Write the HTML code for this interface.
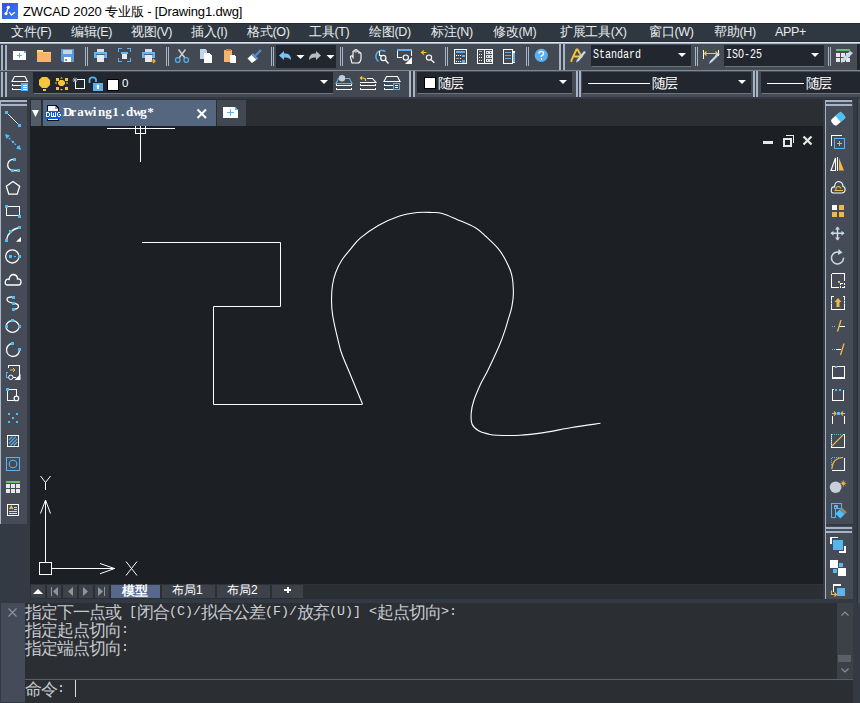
<!DOCTYPE html>
<html><head><meta charset="utf-8">
<style>
*{margin:0;padding:0;box-sizing:border-box}
html,body{width:860px;height:703px;overflow:hidden;background:#343a44;font-family:"Liberation Sans",sans-serif}
svg{position:absolute;left:0;top:0}
.t{position:absolute;white-space:nowrap;line-height:1}
</style></head><body>
<svg width="860" height="703" viewBox="0 0 860 703" shape-rendering="crispEdges"><rect x="0" y="0" width="860" height="703" fill="#343a44" /><rect x="0" y="0" width="860" height="23" fill="#ffffff" /><rect x="0" y="23" width="860" height="19" fill="#2f3740" /><rect x="0" y="23" width="860" height="1" fill="#262b31" /><rect x="0" y="41" width="860" height="1" fill="#282d33" /><rect x="0" y="42" width="860" height="1" fill="#dfe5eb" /><rect x="0" y="43" width="860" height="1" fill="#a2b2c4" /><rect x="0" y="44" width="857" height="26" fill="#434953" /><rect x="857" y="44" width="3" height="26" fill="#22262d" /><rect x="0" y="70" width="860" height="1" fill="#7d8894" /><rect x="0" y="71" width="860" height="26" fill="#434953" /><rect x="0" y="97" width="860" height="2" fill="#323942" /><rect x="0" y="99" width="860" height="3" fill="#2b2e33" /><rect x="0" y="44" width="1" height="26" fill="#3a4049" /><rect x="1" y="45" width="2" height="25" fill="#a6b4c6" /><rect x="3" y="45" width="2" height="25" fill="#394049" /><rect x="5" y="45" width="2" height="25" fill="#a6b4c6" /><rect x="1" y="72" width="2" height="25" fill="#a6b4c6" /><rect x="3" y="72" width="2" height="25" fill="#394049" /><rect x="5" y="72" width="2" height="25" fill="#a6b4c6" /><rect x="0" y="100" width="27" height="424" fill="#454b57" /><rect x="0" y="100" width="1" height="424" fill="#a6b4c4" /><rect x="1" y="100" width="26" height="2" fill="#a6b4c6" /><rect x="1" y="104" width="26" height="2" fill="#a6b4c6" /><rect x="0" y="524" width="27" height="75" fill="#343a44" /><rect x="27" y="99" width="3" height="500" fill="#343a44" /><rect x="30" y="99" width="793" height="27" fill="#2b2e33" /><rect x="31" y="100" width="10" height="26" fill="#505c66" /><rect x="43" y="100" width="173" height="26" fill="#54677f" /><rect x="217" y="100" width="29" height="26" fill="#424851" /><rect x="30" y="126" width="793" height="458" fill="#1c1f23" /><rect x="30" y="584" width="793" height="15" fill="#2b2e33" /><rect x="30" y="584" width="793" height="1" fill="#2f3338" /><rect x="0" y="599" width="860" height="4" fill="#323942" /><rect x="823" y="99" width="2" height="500" fill="#343a44" /><rect x="825" y="100" width="1" height="499" fill="#a6b4c4" /><rect x="826" y="100" width="27" height="424" fill="#454b57" /><rect x="826" y="100" width="26" height="2" fill="#a6b4c6" /><rect x="826" y="104" width="26" height="2" fill="#a6b4c6" /><rect x="826" y="524" width="27" height="2" fill="#343a44" /><rect x="826" y="526" width="27" height="73" fill="#454b57" /><rect x="826" y="527" width="26" height="2" fill="#a6b4c6" /><rect x="826" y="531" width="26" height="2" fill="#a6b4c6" /><rect x="853" y="99" width="7" height="604" fill="#343a44" /><rect x="857" y="99" width="1" height="604" fill="#2b2e33" /><rect x="858" y="99" width="2" height="604" fill="#434b55" /><rect x="0" y="603" width="860" height="100" fill="#343a44" /><rect x="1" y="603" width="24" height="99" fill="#454b58" /><rect x="25" y="603" width="812" height="76" fill="#2b2e33" /><rect x="837" y="603" width="16" height="76" fill="#3c4047" /><rect x="25" y="679" width="828" height="1" fill="#56616b" /><rect x="25" y="680" width="828" height="23" fill="#2b2e33" /><path d="M142 242.5 H280.5 V306.5 H213.5 V404.5 H362.5" stroke="#ffffff" stroke-width="1" fill="none" shape-rendering="geometricPrecision"/><path d="M362.5 404.0 C360.5 399.2 354.0 383.5 350.6 375.3 C347.2 367.1 344.1 360.2 342.1 354.8 C340.1 349.4 340.3 349.4 338.7 342.9 C337.1 336.4 333.9 322.7 332.7 315.6 C331.5 308.5 331.5 305.3 331.5 300.2 C331.5 295.1 331.8 289.6 332.5 285.0 C333.2 280.4 334.1 276.7 335.7 272.5 C337.3 268.3 339.2 264.1 341.9 260.0 C344.6 255.9 348.6 251.4 351.7 247.7 C354.8 244.0 356.1 241.6 360.5 237.9 C364.9 234.2 371.8 229.1 378.3 225.4 C384.8 221.8 393.1 218.2 399.6 216.0 C406.1 213.8 412.1 213.1 417.4 212.5 C422.7 211.9 427.5 212.3 431.6 212.5 C435.8 212.7 438.1 212.3 442.3 213.5 C446.5 214.7 451.4 217.0 457.0 219.4 C462.6 221.8 471.0 225.1 475.8 227.9 C480.6 230.8 482.3 233.1 486.0 236.5 C489.7 239.9 494.7 244.4 498.0 248.4 C501.3 252.4 503.4 255.9 505.7 260.3 C508.0 264.7 510.4 269.2 511.7 274.8 C513.0 280.4 513.4 288.2 513.4 293.6 C513.4 299.0 512.5 303.0 511.7 307.3 C510.9 311.6 509.5 315.2 508.3 319.2 C507.1 323.2 506.2 326.7 504.7 331.2 C503.2 335.7 501.9 339.5 499.1 346.0 C496.3 352.5 491.0 363.8 487.9 370.2 C484.8 376.6 482.8 379.2 480.5 384.2 C478.2 389.2 475.6 395.2 474.0 400.0 C472.4 404.8 471.5 409.0 471.2 413.0 C470.9 417.0 470.9 421.2 472.1 424.2 C473.3 427.1 476.0 429.1 478.6 430.7 C481.2 432.3 484.8 433.1 487.9 433.9 C491.0 434.7 491.9 435.1 497.2 435.3 C502.5 435.5 511.8 435.8 519.5 435.3 C527.2 434.9 535.0 433.9 543.7 432.6 C552.4 431.3 562.1 429.1 571.6 427.5 C581.1 425.9 595.7 424.0 600.5 423.3" stroke="#ffffff" stroke-width="1.1" fill="none" shape-rendering="geometricPrecision"/><rect x="107" y="128" width="68" height="1" fill="#ffffff" /><rect x="140" y="126" width="1" height="36" fill="#ffffff" /><path d="M135.5 126 V133.5 H145.5 V126" stroke="#ffffff" stroke-width="1" fill="none" /><path d="M39.5 562.5 h12 v12 h-12 z" stroke="#ffffff" stroke-width="1" fill="none" /><rect x="45" y="500" width="1" height="62" fill="#ffffff" /><path d="M45.5 500 L40.5 513.5 M45.5 500 L50.5 513.5" stroke="#ffffff" stroke-width="1" fill="none" shape-rendering="geometricPrecision"/><path d="M40.5 476 L45.5 482.5 L50.5 476 M45.5 482.5 V490" stroke="#ffffff" stroke-width="1" fill="none" shape-rendering="geometricPrecision"/><rect x="52" y="568" width="63" height="1" fill="#ffffff" /><path d="M114.5 568.5 L100 563.5 M114.5 568.5 L100 573.8" stroke="#ffffff" stroke-width="1" fill="none" shape-rendering="geometricPrecision"/><path d="M126 561.5 L137 575.5 M137 561.5 L126 575.5" stroke="#ffffff" stroke-width="1" fill="none" shape-rendering="geometricPrecision"/><rect x="763" y="141" width="10" height="3" fill="#e8e8e8" /><path d="M783.5 138.5 h7 v7 h-7 z" stroke="#e8e8e8" stroke-width="2" fill="none" /><path d="M786 135.5 h7.5 v7.5" stroke="#e8e8e8" stroke-width="1.5" fill="none" /><path d="M803.5 136.5 L811.5 144.5 M811.5 136.5 L803.5 144.5" stroke="#e8e8e8" stroke-width="2.2" fill="none" shape-rendering="geometricPrecision"/><rect x="85" y="47" width="1" height="19" fill="#a6b4c6" /><rect x="87" y="47" width="1" height="19" fill="#a6b4c6" /><rect x="166" y="47" width="1" height="19" fill="#a6b4c6" /><rect x="168" y="47" width="1" height="19" fill="#a6b4c6" /><rect x="271" y="47" width="1" height="19" fill="#a6b4c6" /><rect x="273" y="47" width="1" height="19" fill="#a6b4c6" /><rect x="340" y="47" width="1" height="19" fill="#a6b4c6" /><rect x="342" y="47" width="1" height="19" fill="#a6b4c6" /><rect x="445" y="47" width="1" height="19" fill="#a6b4c6" /><rect x="447" y="47" width="1" height="19" fill="#a6b4c6" /><rect x="526" y="47" width="1" height="19" fill="#a6b4c6" /><rect x="528" y="47" width="1" height="19" fill="#a6b4c6" /><rect x="276" y="45" width="60" height="23" fill="#21262f" /><rect x="559" y="44" width="2" height="26" fill="#a6b4c6" /><rect x="561" y="44" width="2" height="26" fill="#394049" /><rect x="563" y="44" width="2" height="26" fill="#a6b4c6" /><rect x="565" y="44" width="292" height="26" fill="#464c56" /><rect x="591" y="45" width="100" height="21" fill="#21262f" /><rect x="592" y="66" width="99" height="1" fill="#6c7480" /><path d="M678.0 53 h8 l-4.0 4 z" fill="#ffffff" shape-rendering="geometricPrecision"/><rect x="695" y="47" width="1" height="19" fill="#a6b4c6" /><rect x="697" y="47" width="1" height="19" fill="#a6b4c6" /><rect x="724" y="45" width="100" height="21" fill="#21262f" /><rect x="725" y="66" width="99" height="1" fill="#6c7480" /><path d="M811.0 53 h8 l-4.0 4 z" fill="#ffffff" shape-rendering="geometricPrecision"/><rect x="828" y="47" width="1" height="19" fill="#a6b4c6" /><rect x="830" y="47" width="1" height="19" fill="#a6b4c6" /><rect x="33" y="72" width="300" height="21" fill="#21262f" /><rect x="34" y="93" width="299" height="1" fill="#6c7480" /><path d="M320.0 80 h8 l-4.0 4 z" fill="#ffffff" shape-rendering="geometricPrecision"/><rect x="409" y="71" width="2" height="26" fill="#a6b4c6" /><rect x="411" y="71" width="2" height="26" fill="#394049" /><rect x="413" y="71" width="2" height="26" fill="#a6b4c6" /><rect x="415" y="71" width="445" height="26" fill="#464c56" /><rect x="417" y="72" width="155" height="21" fill="#21262f" /><rect x="418" y="93" width="154" height="1" fill="#6c7480" /><path d="M559.0 80 h8 l-4.0 4 z" fill="#ffffff" shape-rendering="geometricPrecision"/><rect x="576" y="71" width="2" height="26" fill="#a6b4c6" /><rect x="578" y="71" width="1" height="26" fill="#394049" /><rect x="579" y="71" width="2" height="26" fill="#a6b4c6" /><rect x="582" y="72" width="169" height="21" fill="#21262f" /><rect x="583" y="93" width="168" height="1" fill="#6c7480" /><path d="M738.0 80 h8 l-4.0 4 z" fill="#ffffff" shape-rendering="geometricPrecision"/><rect x="753" y="71" width="2" height="26" fill="#a6b4c6" /><rect x="755" y="71" width="1" height="26" fill="#394049" /><rect x="756" y="71" width="2" height="26" fill="#a6b4c6" /><rect x="761" y="72" width="99" height="21" fill="#21262f" /><rect x="762" y="93" width="98" height="1" fill="#6c7480" /><rect x="107" y="79" width="12" height="12" fill="#000" /><rect x="108" y="80" width="10" height="10" fill="#fff" /><rect x="424" y="77" width="12" height="12" fill="#000" /><rect x="425" y="78" width="10" height="10" fill="#fff" /><rect x="588" y="83" width="62" height="1" fill="#fff" /><rect x="767" y="83" width="37" height="1" fill="#fff" /><path d="M32.0 110 h7 l-3.5 7 z" fill="#ffffff" shape-rendering="geometricPrecision"/><path d="M197.5 109.5 L206 118 M206 109.5 L197.5 118" stroke="#fff" stroke-width="2.1" fill="none" shape-rendering="geometricPrecision"/><rect x="31" y="585" width="14" height="13" fill="#3d424a" /><rect x="47" y="585" width="14" height="13" fill="#3d424a" /><rect x="63" y="585" width="14" height="13" fill="#3d424a" /><rect x="79" y="585" width="14" height="13" fill="#3d424a" /><rect x="95" y="585" width="14" height="13" fill="#3d424a" /><path d="M33 594 h10 l-5 -5 z" fill="#fff" shape-rendering="geometricPrecision"/><rect x="51" y="587" width="1" height="9" fill="#8d959e" /><path d="M58 587 v9 l-5 -4.5 z" fill="#8d959e" shape-rendering="geometricPrecision"/><path d="M73 587 v9 l-5 -4.5 z" fill="#8d959e" shape-rendering="geometricPrecision"/><path d="M83 587 v9 l5 -4.5 z" fill="#8d959e" shape-rendering="geometricPrecision"/><path d="M98 587 v9 l5 -4.5 z" fill="#8d959e" shape-rendering="geometricPrecision"/><rect x="104" y="587" width="1" height="9" fill="#8d959e" /><rect x="111" y="585" width="49" height="13" fill="#56698a" /><rect x="162" y="585" width="53" height="13" fill="#3d424a" /><rect x="217" y="585" width="53" height="13" fill="#3d424a" /><rect x="272" y="585" width="31" height="13" fill="#3d424a" /><rect x="284" y="589" width="7" height="2" fill="#fff" /><rect x="286.5" y="587" width="2" height="6" fill="#fff" /><path d="M841.5 615.5 l3.5 -3.5 l3.5 3.5" stroke="#8a9099" stroke-width="1.2" fill="none" shape-rendering="geometricPrecision"/><rect x="838" y="655" width="13" height="7" fill="#5a6068" /><path d="M841.5 668.5 l3.5 3.5 l3.5 -3.5" stroke="#8a9099" stroke-width="1.2" fill="none" shape-rendering="geometricPrecision"/><path d="M8.5 608.5 L16.5 616.5 M16.5 608.5 L8.5 616.5" stroke="#8a9099" stroke-width="1.3" fill="none" shape-rendering="geometricPrecision"/><rect x="75" y="680" width="1" height="17" fill="#d8dcdf" /><defs><linearGradient id="zg" x1="0" y1="0" x2="1" y2="1"><stop offset="0" stop-color="#2a55e0"/><stop offset="1" stop-color="#3f7cf2"/></linearGradient></defs><rect x="2" y="3" width="16" height="16" fill="url(#zg)" /><path d="M8.3 7.5 L6.2 13.5 M9.3 12 L11.4 15 L14.8 12.3" stroke="#ffffff" stroke-width="1.3" fill="none" shape-rendering="geometricPrecision"/><circle cx="8.3" cy="7.3" r="1.6" fill="#ffffff" shape-rendering="geometricPrecision"/><circle cx="6" cy="13.6" r="1.6" fill="#ffffff" shape-rendering="geometricPrecision"/><path d="M13 51 h11 l2 2 v7 h-13 z" fill="#ffffff"/><rect x="24" y="51" width="2" height="2" fill="#5cb0f0" /><rect x="19" y="53" width="1" height="5" fill="#5cb0f0" /><rect x="17" y="55" width="5" height="1" fill="#5cb0f0" /><rect x="37" y="50" width="6" height="2" fill="#f8dc95" /><rect x="37" y="52" width="14" height="10" fill="#f6b46c" /><rect x="43" y="52" width="8" height="1" fill="#f9d08a" /><path d="M61 49 h13 v13 h-12 l-1 -1 z" fill="#5e9ad8"/><rect x="63" y="50" width="9" height="4" fill="#c8d4e4" /><rect x="64" y="57" width="7" height="5" fill="#ffffff" /><rect x="65" y="59" width="2" height="2" fill="#5e9ad8" /><rect x="97" y="49" width="7" height="3" fill="#d7dde5" /><rect x="94" y="52" width="13" height="6" fill="#6ab4f0" /><rect x="96" y="54" width="9" height="1" fill="#3a6890" /><rect x="97" y="55" width="7" height="7" fill="#e6ebf2" /><path d="M118.5 52 v-3.5 h3.5 M127 48.5 h3.5 v3.5 M130.5 58 v3.5 h-3.5 M122 61.5 h-3.5 v-3.5" stroke="#5cb0f0" stroke-width="1" fill="none" /><rect x="121" y="52" width="7" height="2" fill="#6ab4f0" /><rect x="122" y="54" width="5" height="5" fill="#e6ebf2" /><rect x="145" y="49" width="7" height="3" fill="#d7dde5" /><rect x="142" y="52" width="13" height="6" fill="#6ab4f0" /><rect x="144" y="54" width="9" height="1" fill="#3a6890" /><rect x="145" y="55" width="7" height="7" fill="#e6ebf2" /><path d="M151 61 h4 M153 59 l2 2 l-2 2" stroke="#f8b830" stroke-width="1.2" fill="none" shape-rendering="geometricPrecision"/><path d="M178.5 49.5 L185 58 M185.5 49.5 L179 58" stroke="#c8d4e0" stroke-width="1.4" fill="none" shape-rendering="geometricPrecision"/><circle cx="177.8" cy="60" r="2.3" stroke="#5cb0f0" stroke-width="1.2" fill="none" shape-rendering="geometricPrecision"/><circle cx="186.2" cy="60" r="2.3" stroke="#5cb0f0" stroke-width="1.2" fill="none" shape-rendering="geometricPrecision"/><path d="M200 49 h5 l2 2 v8 h-7 z" fill="#c0d4ec"/><path d="M204 53 h5 l3 3 v7 h-8 z" fill="#ffffff"/><rect x="224" y="50" width="8" height="12" fill="#f6b46c" /><rect x="226" y="49" width="5" height="2" fill="#c87846" /><path d="M230 55 h4 l2 2 v6 h-6 z" fill="#ffffff"/><path d="M261 50 L255.5 55.5" stroke="#4a8fd6" stroke-width="2.2" fill="none" shape-rendering="geometricPrecision"/><path d="M253 53.5 L258 58.5 L252 63 L247.5 58.5 z" fill="#ffffff" shape-rendering="geometricPrecision"/><path d="M253 53.5 L258 58.5 L256.5 60 L251.5 55 z" fill="#4a8fd6" shape-rendering="geometricPrecision"/><path d="M279 55.4 L284 51 V53.5 H286 Q291 54 291 60 Q289 57.5 286 57.5 H284 V60 z" fill="#7cc0f4" shape-rendering="geometricPrecision"/><path d="M321 55.4 L316 51 V53.5 H314 Q309 54 309 60 Q311 57.5 314 57.5 H316 V60 z" fill="#b8bcc0" shape-rendering="geometricPrecision"/><path d="M296.5 55 h8 l-4.0 4 z" fill="#ffffff" shape-rendering="geometricPrecision"/><path d="M326.5 55 h8 l-4.0 4 z" fill="#ffffff" shape-rendering="geometricPrecision"/><path d="M352 63 L350.5 57.5 Q350 55.5 352 56 L353 57.5 V51.5 Q354 50 355 51.5 V50 Q356 49 357 50 V51.5 Q358 50.5 359 51.5 V53 Q360.5 52 361 53.5 V59 Q360 63 358 63 z" stroke="#ffffff" stroke-width="1.1" fill="none" shape-rendering="geometricPrecision"/><path d="M385.5 51.5 A6 6 0 1 0 378.5 61.5" stroke="#5cb0f0" stroke-width="1.5" fill="none" shape-rendering="geometricPrecision"/><path d="M379.5 51 V55.5 H382" stroke="#ffffff" stroke-width="1.1" fill="none" shape-rendering="geometricPrecision"/><circle cx="383.3" cy="58" r="2.6" stroke="#ffffff" stroke-width="1.2" fill="none" shape-rendering="geometricPrecision"/><path d="M385.3 60 L388.5 63.5" stroke="#ffffff" stroke-width="1.3" fill="none" shape-rendering="geometricPrecision"/><rect x="397" y="49" width="15" height="2" fill="#5cb0f0" /><path d="M397.5 51 V57.5 H402" stroke="#ffffff" stroke-width="1" fill="none" /><path d="M411.5 51 V56" stroke="#ffffff" stroke-width="1" fill="none" /><circle cx="405.8" cy="57.6" r="2.6" stroke="#ffffff" stroke-width="1.2" fill="none" shape-rendering="geometricPrecision"/><path d="M412 57 V64 H405 z" fill="#ffffff" shape-rendering="geometricPrecision"/><path d="M426.5 52.5 H421.5 M424 50.5 L421.5 52.5 L424 54.5" stroke="#f8b830" stroke-width="1.2" fill="none" shape-rendering="geometricPrecision"/><circle cx="429" cy="57.6" r="2.6" stroke="#ffffff" stroke-width="1.2" fill="none" shape-rendering="geometricPrecision"/><path d="M431 59.6 L434.3 62.8" stroke="#ffffff" stroke-width="1.3" fill="none" shape-rendering="geometricPrecision"/><path d="M454.5 49.5 h12 v14 h-12 z" stroke="#ffffff" stroke-width="1" fill="none" /><rect x="456" y="51" width="9" height="2" fill="#5cb0f0" /><rect x="456" y="55" width="1" height="1" fill="#ffffff" /><rect x="458" y="55" width="1" height="1" fill="#ffffff" /><rect x="460" y="55" width="1" height="1" fill="#ffffff" /><rect x="456" y="58" width="1" height="1" fill="#ffffff" /><rect x="458" y="58" width="1" height="1" fill="#ffffff" /><rect x="460" y="58" width="1" height="1" fill="#ffffff" /><rect x="456" y="61" width="1" height="1" fill="#ffffff" /><rect x="458" y="61" width="1" height="1" fill="#ffffff" /><rect x="460" y="61" width="1" height="1" fill="#ffffff" /><rect x="462" y="55" width="3" height="2" fill="#5cb0f0" /><rect x="462" y="60" width="3" height="3" fill="#5cb0f0" /><rect x="456" y="58" width="3" height="1" fill="#5cb0f0" /><path d="M477.5 49.5 h15 v14 h-15 z M484.5 49.5 v14" stroke="#ffffff" stroke-width="1" fill="none" /><rect x="479" y="51" width="3" height="1" fill="#5cb0f0" /><rect x="479" y="54" width="1" height="1" fill="#ffffff" /><rect x="481" y="54" width="1" height="1" fill="#ffffff" /><rect x="479" y="57" width="1" height="1" fill="#ffffff" /><rect x="481" y="57" width="1" height="1" fill="#ffffff" /><rect x="479" y="60" width="1" height="1" fill="#ffffff" /><rect x="481" y="60" width="1" height="1" fill="#ffffff" /><path d="M486.5 51.5 h2 v2 h-2 z" stroke="#d9e0e8" stroke-width="1" fill="none" /><path d="M489.5 51.5 h2 v2 h-2 z" stroke="#d9e0e8" stroke-width="1" fill="none" /><path d="M486.5 55.5 h2 v2 h-2 z" stroke="#d9e0e8" stroke-width="1" fill="none" /><path d="M489.5 55.5 h2 v2 h-2 z" stroke="#d9e0e8" stroke-width="1" fill="none" /><path d="M486.5 59.5 h2 v2 h-2 z" stroke="#d9e0e8" stroke-width="1" fill="none" /><path d="M489.5 59.5 h2 v2 h-2 z" stroke="#d9e0e8" stroke-width="1" fill="none" /><path d="M503.5 49.5 h9 v14 h-9 z" stroke="#ffffff" stroke-width="1" fill="none" /><rect x="512" y="51" width="3" height="12" fill="#ffffff" /><rect x="513" y="53" width="2" height="9" fill="#5cb0f0" /><rect x="505" y="52" width="6" height="1" fill="#5cb0f0" /><rect x="505" y="55" width="6" height="1" fill="#5cb0f0" /><rect x="505" y="58" width="6" height="1" fill="#5cb0f0" /><circle cx="541.3" cy="55.3" r="6.6" fill="#5cb0f0" shape-rendering="geometricPrecision"/><path d="M539 53.5 Q539 51.3 541.3 51.3 Q543.6 51.3 543.6 53.5 Q543.6 55 541.3 56 V57" stroke="#ffffff" stroke-width="1.3" fill="none" shape-rendering="geometricPrecision"/><rect x="540.5" y="58" width="1.6" height="1.6" fill="#ffffff" /><path d="M571.5 62 V60 L576.5 49.5 h1 L582 57.5 M573 56.5 h7" stroke="#f8c440" stroke-width="1.8" fill="none" shape-rendering="geometricPrecision"/><path d="M586 52 L579 61 L576 62.5 L577 59.5 L584 51 z" fill="#c8d8ea" shape-rendering="geometricPrecision"/><rect x="703" y="50" width="1" height="9" fill="#ffffff" /><rect x="718" y="50" width="1" height="6" fill="#ffffff" /><path d="M704 53.5 H718 M706.5 51.5 L704.5 53.5 L706.5 55.5 M715.5 51.5 L717.5 53.5 L715.5 55.5" stroke="#f8c440" stroke-width="1.1" fill="none" shape-rendering="geometricPrecision"/><path d="M720 54 L712 62 L709 64 L710 61 L718 53 z" fill="#c8d8ea" shape-rendering="geometricPrecision"/><rect x="836" y="49" width="14" height="2" fill="#5cc070" /><rect x="836" y="53" width="4" height="4" fill="#e8e8e8" /><rect x="841" y="53" width="4" height="4" fill="#e8e8e8" /><rect x="846" y="53" width="4" height="4" fill="#e8e8e8" /><rect x="836" y="58" width="4" height="4" fill="#e8e8e8" /><rect x="841" y="58" width="4" height="4" fill="#e8e8e8" /><rect x="846" y="58" width="4" height="4" fill="#e8e8e8" /><path d="M853 53 L845 61 L841 63 L842 59 L850 51 z" fill="#c8d8ea" shape-rendering="geometricPrecision"/><path d="M14.5 76.5 h10.5 l2.5 5 h-15.5 z" stroke="#ffffff" stroke-width="1.1" fill="none" shape-rendering="geometricPrecision"/><path d="M12.5 83.5 v2 h8.5 M12.5 87.5 v2 h8.5" stroke="#ffffff" stroke-width="1.1" fill="none" /><rect x="21" y="83" width="7" height="8" fill="#5cb0f0" /><rect x="23" y="85" width="4" height="1" fill="#ffffff" /><rect x="23" y="87" width="4" height="1" fill="#ffffff" /><rect x="23" y="89" width="4" height="1" fill="#ffffff" /><path d="M42 77 h5 l3 3 v5 l-3 3 h-5 l-3 -3 v-5 z" fill="#f8c440" shape-rendering="geometricPrecision"/><rect x="43" y="89" width="3" height="2" fill="#f8c440" /><path d="M60 80 h3 l2 2 v2 l-2 2 h-3 l-2 -2 v-2 z" fill="#f8c440" shape-rendering="geometricPrecision"/><rect x="56" y="78" width="3" height="3" fill="#f8c440" /><rect x="65" y="78" width="3" height="3" fill="#f8c440" /><rect x="56" y="87" width="3" height="3" fill="#f8c440" /><rect x="65" y="87" width="3" height="3" fill="#f8c440" /><path d="M61.5 77 l1.5 1.5 h-3 z M61.5 90.5 l1.5 -1.5 h-3 z M55 83 l1.5 -1.5 v3 z M68 83 l-1.5 -1.5 v3 z" fill="#f8c440" shape-rendering="geometricPrecision"/><path d="M76.5 79.5 h8 v9 h-9 v-8" stroke="#ffffff" stroke-width="1" fill="none" /><path d="M72.5 80 h5 M75 77.5 v5 M73.3 78.3 l3.4 3.4 M76.7 78.3 l-3.4 3.4" stroke="#c0c0c0" stroke-width="0.9" fill="none" shape-rendering="geometricPrecision"/><path d="M89.5 83 V80 Q89.5 77.3 92.8 77.3 Q96 77.3 96 80 V82" stroke="#5cb0f0" stroke-width="1.8" fill="none" shape-rendering="geometricPrecision"/><rect x="93" y="83" width="10" height="8" fill="#5cb0f0" /><circle cx="98" cy="86" r="1.3" fill="#ffffff" shape-rendering="geometricPrecision"/><rect x="97.3" y="86" width="1.5" height="3" fill="#ffffff" /><path d="M338.5 78.5 h11 l2.5 5 h-16 z" stroke="#5cb0f0" stroke-width="1.1" fill="none" shape-rendering="geometricPrecision"/><path d="M336.5 83.5 v2 h15 v-2 M336.5 87.5 v2 h15 v-2" stroke="#ffffff" stroke-width="1.1" fill="none" stroke-linejoin="round"/><circle cx="342" cy="78.3" r="3.2" fill="#c4ccd8" shape-rendering="geometricPrecision"/><path d="M367 78.5 h5.5 l3.5 4 h-16" stroke="#ffffff" stroke-width="1.1" fill="none" shape-rendering="geometricPrecision"/><path d="M360.5 82.5 h15 M360.5 83.5 v2 h15 v-2 M360.5 87.5 v2 h15 v-2" stroke="#ffffff" stroke-width="1.1" fill="none" /><path d="M365.5 81 Q366 78 363 78 H360.5 M362 76.5 L360.5 78 L362 79.5" stroke="#f8c440" stroke-width="1.2" fill="none" shape-rendering="geometricPrecision"/><path d="M386.5 76.5 h11 l2.5 5 h-16 z" stroke="#ffffff" stroke-width="1.1" fill="none" shape-rendering="geometricPrecision"/><path d="M384.5 83.5 v2 h8 M384.5 87.5 v2 h8" stroke="#ffffff" stroke-width="1.1" fill="none" /><path d="M393.5 83.5 h6 v6 h-6 z" stroke="#5cb0f0" stroke-width="1.2" fill="none" /><rect x="395" y="85" width="3" height="1" fill="#ffffff" /><rect x="395" y="87" width="3" height="1" fill="#ffffff" /><path d="M6.5 112.5 L19.5 125.5" stroke="#ffffff" stroke-width="1" fill="none" shape-rendering="geometricPrecision"/><rect x="5.0" y="111.0" width="3" height="3" fill="#4cc0f8" /><rect x="18.0" y="124.0" width="3" height="3" fill="#4cc0f8" /><path d="M6 135 L20 149" stroke="#4cc0f8" stroke-width="1.2" fill="none" shape-rendering="geometricPrecision" stroke-dasharray="2 2"/><path d="M5 134 l5 1.5 l-3.5 3.5 z M21 150 l-5 -1.5 l3.5 -3.5 z" fill="#4cc0f8" shape-rendering="geometricPrecision"/><rect x="11.75" y="140.75" width="2.5" height="2.5" fill="#4cc0f8" /><path d="M14 159.5 A5.5 5.5 0 0 0 12.5 170.5 H18.5" stroke="#ffffff" stroke-width="1.3" fill="none" shape-rendering="geometricPrecision"/><rect x="13.0" y="157.8" width="3" height="3" fill="#4cc0f8" /><rect x="10.8" y="169.0" width="3" height="3" fill="#4cc0f8" /><rect x="17.3" y="169.0" width="3" height="3" fill="#4cc0f8" /><path d="M13 181.5 L19.7 186.3 L17.2 194.2 L8.8 194.2 L6.3 186.3 z" stroke="#ffffff" stroke-width="1.3" fill="none" shape-rendering="geometricPrecision"/><path d="M6.5 206.5 H19.5 V215.5 H6.5 z" stroke="#ffffff" stroke-width="1" fill="none" /><rect x="5.0" y="204.7" width="3" height="3" fill="#4cc0f8" /><rect x="18.0" y="214.5" width="3" height="3" fill="#4cc0f8" /><path d="M6.5 240 Q8 230 19.5 227.5" stroke="#ffffff" stroke-width="1.3" fill="none" shape-rendering="geometricPrecision"/><rect x="5.0" y="238.9" width="3" height="3" fill="#4cc0f8" /><rect x="8.8" y="229.9" width="3" height="3" fill="#4cc0f8" /><rect x="18.1" y="225.8" width="3" height="3" fill="#4cc0f8" /><path d="M21 237 V241.7 H16 z" fill="#ffffff" shape-rendering="geometricPrecision"/><circle cx="12.3" cy="256.4" r="6.6" stroke="#ffffff" stroke-width="1.3" fill="none" shape-rendering="geometricPrecision"/><rect x="9.0" y="254.89999999999998" width="3" height="3" fill="#4cc0f8" /><rect x="17.9" y="254.89999999999998" width="3" height="3" fill="#4cc0f8" /><rect x="14" y="256" width="2" height="1" fill="#4cc0f8" /><path d="M7 285 Q4.5 284.5 5.5 281 Q6.5 278.5 9 279.5 Q10 274.5 13.5 274.5 Q17.5 275 17.5 279 Q21 278.5 21 282 Q21 285 18.5 285 z" stroke="#ffffff" stroke-width="1.3" fill="none" shape-rendering="geometricPrecision"/><path d="M13.5 297 Q7 296.5 7 299.5 Q7.5 302.5 13 303 Q19 304 18.5 306.5 Q18 309.5 13.5 309" stroke="#ffffff" stroke-width="1.3" fill="none" shape-rendering="geometricPrecision"/><rect x="11.8" y="295.5" width="3" height="3" fill="#4cc0f8" /><rect x="11.8" y="301.5" width="3" height="3" fill="#4cc0f8" /><rect x="11.8" y="307.7" width="3" height="3" fill="#4cc0f8" /><ellipse cx="12.5" cy="326.5" rx="6.5" ry="5.8" stroke="#ffffff" stroke-width="1.3" fill="none" shape-rendering="geometricPrecision"/><rect x="11.0" y="319.3" width="3" height="3" fill="#4cc0f8" /><rect x="4.5" y="325.0" width="3" height="3" fill="#4cc0f8" /><rect x="17.5" y="325.0" width="3" height="3" fill="#4cc0f8" /><path d="M12.5 343.5 A6.5 6.5 0 1 0 19.5 349.6" stroke="#ffffff" stroke-width="1.3" fill="none" shape-rendering="geometricPrecision"/><rect x="11.0" y="341.7" width="3" height="3" fill="#4cc0f8" /><rect x="18.1" y="348.1" width="3" height="3" fill="#4cc0f8" /><path d="M8.5 368 V365.5 H19.5 V377" stroke="#ffffff" stroke-width="1" fill="none" /><path d="M8 372.5 H6.5 V377.5 H8" stroke="#5ab4f0" stroke-width="1" fill="none" /><path d="M10 370 H15 M13 368 l2 2 l-2 2" stroke="#f0b84a" stroke-width="1" fill="none" shape-rendering="geometricPrecision"/><circle cx="10.8" cy="377.3" r="2.2" stroke="#ffffff" stroke-width="1" fill="none" shape-rendering="geometricPrecision"/><rect x="13" y="377" width="3" height="1" fill="#ffffff" /><path d="M20.5 374 V380 H14.5 z" fill="#ffffff" shape-rendering="geometricPrecision"/><path d="M7.5 389.5 H16.5 V396 M14 400.5 H7.5 V389.5" stroke="#ffffff" stroke-width="1" fill="none" /><rect x="6.25" y="388.25" width="2.5" height="2.5" fill="#4cc0f8" /><circle cx="16.4" cy="398.4" r="2.3" stroke="#ffffff" stroke-width="1.1" fill="none" shape-rendering="geometricPrecision"/><rect x="8.0" y="413.0" width="2" height="2" fill="#4cc0f8" /><rect x="16.0" y="413.0" width="2" height="2" fill="#4cc0f8" /><rect x="12.0" y="417.0" width="2" height="2" fill="#4cc0f8" /><rect x="8.0" y="421.0" width="2" height="2" fill="#4cc0f8" /><rect x="16.0" y="421.0" width="2" height="2" fill="#4cc0f8" /><path d="M7.5 435.5 H18.5 V446.5 H7.5 z" stroke="#ffffff" stroke-width="1.2" fill="none" /><g stroke="#5ab4f0" stroke-width="1.1" shape-rendering="geometricPrecision"><path d="M9 440 L12.5 436.5 M9 443.5 L15.8 436.7 M10.5 445.5 L17.2 438.8 M13.8 445.5 L17.2 442"/></g><path d="M6.5 457.5 H19.5 V470.5 H6.5 z" stroke="#5ab4f0" stroke-width="1.2" fill="none" /><circle cx="13" cy="464" r="3.8" stroke="#5ab4f0" stroke-width="1.1" fill="none" shape-rendering="geometricPrecision"/><rect x="6" y="481" width="14" height="2" fill="#6cc06c" /><rect x="6" y="484" width="4" height="4" fill="#e8e8e8" /><rect x="11" y="484" width="4" height="4" fill="#e8e8e8" /><rect x="16" y="484" width="4" height="4" fill="#e8e8e8" /><rect x="6" y="489" width="4" height="4" fill="#e8e8e8" /><rect x="11" y="489" width="4" height="4" fill="#e8e8e8" /><rect x="16" y="489" width="4" height="4" fill="#e8e8e8" /><path d="M7.5 504.5 H18.5 V515.5 H7.5 z" stroke="#ffffff" stroke-width="1.3" fill="none" /><path d="M9.5 509 L11.3 506.5 L13 509 M10 508.2 h2.5" stroke="#f8c440" stroke-width="1.3" fill="none" shape-rendering="geometricPrecision"/><rect x="14" y="507" width="3" height="1" fill="#c8d8ea" /><rect x="14" y="509" width="3" height="1" fill="#c8d8ea" /><rect x="9" y="511" width="8" height="1" fill="#c8d8ea" /><rect x="9" y="513" width="8" height="1" fill="#c8d8ea" /><g transform="rotate(-40 838 119)" shape-rendering="geometricPrecision"><rect x="831" y="115" width="14" height="8" rx="3" fill="#ffffff"/><rect x="838" y="115" width="7" height="8" fill="#4cc0f8"/><path d="M842 115 h0.01" /></g><path d="M831.5 146 V135.5 H842" stroke="#ffffff" stroke-width="1.1" fill="none" /><path d="M834.5 138.5 H844.5 V148.5 H834.5 z" stroke="#5ab4f0" stroke-width="1.2" fill="none" /><path d="M839.5 141 V146 M837 143.5 H842" stroke="#f0b84a" stroke-width="1" fill="none" /><path d="M835.5 158 V170.5 H831 z" stroke="#ffffff" stroke-width="1.1" fill="none" shape-rendering="geometricPrecision"/><rect x="837" y="157" width="1" height="14" fill="#ffffff" /><path d="M839 158 L844 170.5 H839 z" fill="#f0b84a" shape-rendering="geometricPrecision"/><path d="M833 193 Q830.5 192.5 831.5 189 Q832 186.5 834.5 187 Q835 181.5 838.5 181.5 Q843 182 843 186.5 Q845.5 187 845 190.5 Q844.5 193 842 193 z" stroke="#ffffff" stroke-width="1.1" fill="none" shape-rendering="geometricPrecision"/><path d="M834.5 190.5 H843 M836 190.5 Q835 187 838.5 186.5 Q840.5 186.5 840.5 188.5" stroke="#f0b84a" stroke-width="1.1" fill="none" shape-rendering="geometricPrecision"/><rect x="832" y="205" width="5" height="5" fill="#ffffff" /><rect x="839" y="205" width="5" height="5" fill="#f0b84a" /><rect x="832" y="212" width="5" height="5" fill="#f0b84a" /><rect x="839" y="212" width="5" height="5" fill="#f0b84a" /><g stroke="#c8d8ea" stroke-width="1.5" fill="none" shape-rendering="geometricPrecision"><path d="M831 233.3 H844 M837.5 227 V240"/></g><path d="M830.5 233.3 l3 -2.5 v5 z M844.5 233.3 l-3 -2.5 v5 z M837.5 226.5 l-2.5 3 h5 z M837.5 240.5 l-2.5 -3 h5 z" fill="#c8d8ea" shape-rendering="geometricPrecision"/><path d="M840 252.5 A6 6 0 1 0 843.5 257.6" stroke="#c8d8ea" stroke-width="1.5" fill="none" shape-rendering="geometricPrecision"/><path d="M838.5 249 L842.5 252.5 L838 255 z" fill="#c8d8ea" shape-rendering="geometricPrecision"/><path d="M831.5 273.5 H844.5 V281 M839 287.5 H831.5 V273.5" stroke="#ffffff" stroke-width="1.1" fill="none" /><rect x="838.0" y="281.0" width="2" height="2" fill="#f0b84a" /><path d="M840.5 283.5 H844.5 V287.5 H840.5 z" stroke="#ffffff" stroke-width="1" fill="none" stroke-dasharray="2 1"/><path d="M833.5 296.5 H831.5 V309.5 H844.5 V296.5 H842.5" stroke="#ffffff" stroke-width="1.1" fill="none" /><path d="M838 298 l3.5 4 h-2 v5 h-3 v-5 h-2 z" fill="#f0b84a" shape-rendering="geometricPrecision"/><rect x="831" y="300" width="1" height="1" fill="#4cc0f8" /><rect x="831" y="303" width="1" height="1" fill="#4cc0f8" /><rect x="844" y="300" width="1" height="1" fill="#4cc0f8" /><rect x="844" y="303" width="1" height="1" fill="#4cc0f8" /><rect x="832" y="326" width="1" height="1" fill="#4cc0f8" /><rect x="834" y="326" width="1" height="1" fill="#4cc0f8" /><rect x="839" y="326" width="6" height="1" fill="#ffffff" /><path d="M837.5 331.5 L841 320" stroke="#f0b84a" stroke-width="1.3" fill="none" shape-rendering="geometricPrecision"/><rect x="832" y="349" width="1" height="1" fill="#4cc0f8" /><rect x="834" y="349" width="1" height="1" fill="#4cc0f8" /><rect x="836" y="349" width="5" height="1" fill="#ffffff" /><path d="M840.5 355 L844 343.5" stroke="#f0b84a" stroke-width="1.3" fill="none" shape-rendering="geometricPrecision"/><path d="M834.5 366.5 H832.5 V378 H844.5 V366.5 H836" stroke="#ffffff" stroke-width="1.2" fill="none" /><rect x="835.0" y="365.5" width="2" height="2" fill="#4cc0f8" /><path d="M833.5 389.5 H832.5 V400.5 H843.5 V389.5" stroke="#ffffff" stroke-width="1.2" fill="none" /><rect x="835.0" y="388.5" width="2" height="2" fill="#4cc0f8" /><rect x="839.0" y="388.5" width="2" height="2" fill="#4cc0f8" /><path d="M832.5 416 V424 M844.5 416 V424" stroke="#ffffff" stroke-width="1.2" fill="none" /><path d="M832 413.5 H836 M834 411.5 l2 2 l-2 2 M845 413.5 H841 M843 411.5 l-2 2 l2 2" stroke="#f0b84a" stroke-width="1.1" fill="none" shape-rendering="geometricPrecision"/><rect x="837.25" y="412.05" width="2.5" height="2.5" fill="#4cc0f8" /><path d="M831.5 434 V447.5 H844.5 V434.5 H843" stroke="#ffffff" stroke-width="1" fill="none" stroke-dasharray="0"/><rect x="832" y="434" width="10" height="1" fill="#454b57" /><rect x="832" y="434" width="1" height="1" fill="#4cc0f8" /><rect x="834" y="434" width="1" height="1" fill="#4cc0f8" /><rect x="836" y="434" width="1" height="1" fill="#4cc0f8" /><rect x="838" y="434" width="1" height="1" fill="#4cc0f8" /><rect x="840" y="434" width="1" height="1" fill="#4cc0f8" /><rect x="831" y="435" width="1" height="1" fill="#4cc0f8" /><rect x="831" y="437" width="1" height="1" fill="#4cc0f8" /><rect x="831" y="439" width="1" height="1" fill="#4cc0f8" /><rect x="831" y="441" width="1" height="1" fill="#4cc0f8" /><rect x="831" y="443" width="1" height="1" fill="#4cc0f8" /><rect x="831" y="445" width="1" height="1" fill="#4cc0f8" /><rect x="832" y="435" width="1" height="12" fill="#454b57" /><path d="M831.5 447.5 H844.5 V434.5" stroke="#ffffff" stroke-width="1.1" fill="none" /><path d="M832 446 L843 435" stroke="#f0b84a" stroke-width="1.1" fill="none" shape-rendering="geometricPrecision"/><rect x="832" y="457" width="1" height="1" fill="#4cc0f8" /><rect x="834" y="457" width="1" height="1" fill="#4cc0f8" /><rect x="836" y="457" width="1" height="1" fill="#4cc0f8" /><rect x="838" y="457" width="1" height="1" fill="#4cc0f8" /><rect x="831" y="458" width="1" height="1" fill="#4cc0f8" /><rect x="831" y="460" width="1" height="1" fill="#4cc0f8" /><rect x="831" y="462" width="1" height="1" fill="#4cc0f8" /><rect x="831" y="464" width="1" height="1" fill="#4cc0f8" /><path d="M831.5 470.5 H844.5 V457.5" stroke="#ffffff" stroke-width="1.1" fill="none" /><path d="M831.8 469 Q832.5 458 843 457.5" stroke="#f0b84a" stroke-width="1.2" fill="none" shape-rendering="geometricPrecision"/><circle cx="835.6" cy="487.2" r="5.8" fill="#c8d0dc" shape-rendering="geometricPrecision"/><circle cx="843.3" cy="483.4" r="1.3" fill="#f0b84a" shape-rendering="geometricPrecision"/><path d="M843.3 480.3 V486.5 M840.2 483.4 H846.4 M841.2 481.3 L845.4 485.5 M845.4 481.3 L841.2 485.5" stroke="#f0b84a" stroke-width="0.7" fill="none" shape-rendering="geometricPrecision"/><path d="M831.5 503.5 H841.5 V508.5 H835.5 V517.5 H831.5 z M834.5 506 h2.5 v2.5 h-2.5 z" stroke="#5ab4f0" stroke-width="1.1" fill="none" /><g transform="rotate(45 840 514)" shape-rendering="geometricPrecision"><rect x="836.5" y="511" width="7" height="6" fill="#4cc0f8"/><rect x="836.5" y="508" width="7" height="3" fill="#888"/></g><path d="M831 544 V537.5 H837.5" stroke="#ffffff" stroke-width="1.8" fill="none" /><rect x="833" y="540" width="10" height="10" fill="#5ab4f0" /><path d="M845 545.5 V552 H838.5" stroke="#ffffff" stroke-width="1.8" fill="none" /><rect x="830" y="560" width="8" height="8" fill="#ffffff" /><rect x="838" y="568" width="8" height="8" fill="#ffffff" /><rect x="839" y="563" width="4" height="4" fill="#5ab4f0" /><rect x="833" y="569" width="4" height="4" fill="#5ab4f0" /><path d="M833.5 592 V585 H840.5" stroke="#ffffff" stroke-width="1.8" fill="none" /><rect x="837" y="588" width="8" height="8" fill="#5ab4f0" /><path d="M831.5 590.5 V594.5 H836 M834.5 592.5 l2 2 l-2 2" stroke="#f0b84a" stroke-width="1.1" fill="none" shape-rendering="geometricPrecision"/><path d="M47 105 h9 l3 3 v13 h-12 z" fill="#111"/><path d="M48 106 h7.5 l2.5 2.5 v11.5 h-10 z" fill="#fafafa"/><path d="M55 105.5 l3.5 3.5 h-3.5 z" fill="#9a9a9a"/><rect x="45" y="111" width="16" height="8" fill="#0a5ce0" /><rect x="46" y="112" width="1" height="5" fill="#ffffff" /><rect x="47" y="112" width="2" height="1" fill="#ffffff" /><rect x="47" y="116" width="2" height="1" fill="#ffffff" /><rect x="49" y="113" width="1" height="3" fill="#ffffff" /><rect x="51" y="112" width="1" height="5" fill="#ffffff" /><rect x="53" y="113" width="1" height="4" fill="#ffffff" /><rect x="55" y="112" width="1" height="5" fill="#ffffff" /><rect x="52" y="116" width="1" height="1" fill="#ffffff" /><rect x="54" y="116" width="1" height="1" fill="#ffffff" /><rect x="57" y="113" width="1" height="3" fill="#ffffff" /><rect x="58" y="112" width="2" height="1" fill="#ffffff" /><rect x="58" y="116" width="2" height="1" fill="#ffffff" /><rect x="60" y="115" width="1" height="1" fill="#ffffff" /><rect x="59" y="114" width="2" height="1" fill="#ffffff" /><path d="M223 107 h12 l3 3 v8 h-15 z" fill="#fff"/><path d="M235 107 l3 3 h-3 z" fill="#5cb0f0"/><rect x="230" y="109" width="1" height="7" fill="#5cb0f0" /><rect x="227" y="112" width="7" height="1" fill="#5cb0f0" /></svg>
<div class="t" style="left:23px;top:5px;font-size:13px;color:#000;font-family:'Liberation Sans',sans-serif;font-weight:normal;letter-spacing:-0.15px">ZWCAD 2020 专业版 - [Drawing1.dwg]</div><div class="t" style="left:11px;top:26px;font-size:12.5px;color:#e9ecef;font-family:'Liberation Sans',sans-serif;font-weight:normal;letter-spacing:-0.3px">文件(F)</div><div class="t" style="left:71px;top:26px;font-size:12.5px;color:#e9ecef;font-family:'Liberation Sans',sans-serif;font-weight:normal;letter-spacing:-0.3px">编辑(E)</div><div class="t" style="left:131px;top:26px;font-size:12.5px;color:#e9ecef;font-family:'Liberation Sans',sans-serif;font-weight:normal;letter-spacing:-0.3px">视图(V)</div><div class="t" style="left:191px;top:26px;font-size:12.5px;color:#e9ecef;font-family:'Liberation Sans',sans-serif;font-weight:normal;letter-spacing:-0.3px">插入(I)</div><div class="t" style="left:247px;top:26px;font-size:12.5px;color:#e9ecef;font-family:'Liberation Sans',sans-serif;font-weight:normal;letter-spacing:-0.3px">格式(O)</div><div class="t" style="left:309px;top:26px;font-size:12.5px;color:#e9ecef;font-family:'Liberation Sans',sans-serif;font-weight:normal;letter-spacing:-0.3px">工具(T)</div><div class="t" style="left:369px;top:26px;font-size:12.5px;color:#e9ecef;font-family:'Liberation Sans',sans-serif;font-weight:normal;letter-spacing:-0.3px">绘图(D)</div><div class="t" style="left:431px;top:26px;font-size:12.5px;color:#e9ecef;font-family:'Liberation Sans',sans-serif;font-weight:normal;letter-spacing:-0.3px">标注(N)</div><div class="t" style="left:493px;top:26px;font-size:12.5px;color:#e9ecef;font-family:'Liberation Sans',sans-serif;font-weight:normal;letter-spacing:-0.3px">修改(M)</div><div class="t" style="left:560px;top:26px;font-size:12.5px;color:#e9ecef;font-family:'Liberation Sans',sans-serif;font-weight:normal;letter-spacing:-0.3px">扩展工具(X)</div><div class="t" style="left:649px;top:26px;font-size:12.5px;color:#e9ecef;font-family:'Liberation Sans',sans-serif;font-weight:normal;letter-spacing:-0.3px">窗口(W)</div><div class="t" style="left:714px;top:26px;font-size:12.5px;color:#e9ecef;font-family:'Liberation Sans',sans-serif;font-weight:normal;letter-spacing:-0.3px">帮助(H)</div><div class="t" style="left:775px;top:26px;font-size:12.5px;color:#e9ecef;font-family:'Liberation Sans',sans-serif;font-weight:normal;letter-spacing:-0.3px">APP+</div><div class="t" style="left:593px;top:49px;font-size:10px;color:#fff;font-family:'Liberation Mono',monospace;font-weight:normal;transform:scaleY(1.25);transform-origin:0 0">Standard</div><div class="t" style="left:726px;top:49px;font-size:10px;color:#fff;font-family:'Liberation Mono',monospace;font-weight:normal;transform:scaleY(1.25);transform-origin:0 0">ISO-25</div><div class="t" style="left:122px;top:78px;font-size:11.5px;color:#fff;font-family:'Liberation Sans',sans-serif;font-weight:normal;transform:scaleY(1.0);transform-origin:0 0">0</div><div class="t" style="left:438px;top:77px;font-size:13.6px;color:#fff;font-family:'Liberation Sans',sans-serif;font-weight:normal;letter-spacing:-2.2px">随层</div><div class="t" style="left:652px;top:77px;font-size:13.6px;color:#fff;font-family:'Liberation Sans',sans-serif;font-weight:normal;letter-spacing:-2.2px">随层</div><div class="t" style="left:806px;top:77px;font-size:13.6px;color:#fff;font-family:'Liberation Sans',sans-serif;font-weight:normal;letter-spacing:-2.2px">随层</div><div class="t" style="left:63px;top:105px;width:7px;text-align:center;font-size:13px;color:#fff;font-family:'Liberation Serif',serif;font-weight:bold;">D</div><div class="t" style="left:70px;top:105px;width:7px;text-align:center;font-size:13px;color:#fff;font-family:'Liberation Serif',serif;font-weight:bold;">r</div><div class="t" style="left:77px;top:105px;width:7px;text-align:center;font-size:13px;color:#fff;font-family:'Liberation Serif',serif;font-weight:bold;">a</div><div class="t" style="left:84px;top:105px;width:7px;text-align:center;font-size:13px;color:#fff;font-family:'Liberation Serif',serif;font-weight:bold;">w</div><div class="t" style="left:91px;top:105px;width:7px;text-align:center;font-size:13px;color:#fff;font-family:'Liberation Serif',serif;font-weight:bold;">i</div><div class="t" style="left:98px;top:105px;width:7px;text-align:center;font-size:13px;color:#fff;font-family:'Liberation Serif',serif;font-weight:bold;">n</div><div class="t" style="left:105px;top:105px;width:7px;text-align:center;font-size:13px;color:#fff;font-family:'Liberation Serif',serif;font-weight:bold;">g</div><div class="t" style="left:112px;top:105px;width:7px;text-align:center;font-size:13px;color:#fff;font-family:'Liberation Serif',serif;font-weight:bold;">1</div><div class="t" style="left:119px;top:105px;width:7px;text-align:center;font-size:13px;color:#fff;font-family:'Liberation Serif',serif;font-weight:bold;">.</div><div class="t" style="left:126px;top:105px;width:7px;text-align:center;font-size:13px;color:#fff;font-family:'Liberation Serif',serif;font-weight:bold;">d</div><div class="t" style="left:133px;top:105px;width:7px;text-align:center;font-size:13px;color:#fff;font-family:'Liberation Serif',serif;font-weight:bold;">w</div><div class="t" style="left:140px;top:105px;width:7px;text-align:center;font-size:13px;color:#fff;font-family:'Liberation Serif',serif;font-weight:bold;">g</div><div class="t" style="left:147px;top:105px;width:7px;text-align:center;font-size:13px;color:#fff;font-family:'Liberation Serif',serif;font-weight:bold;">*</div><div class="t" style="left:122px;top:585px;font-size:12.5px;color:#fff;font-family:'Liberation Sans',sans-serif;font-weight:bold;">模型</div><div class="t" style="left:172px;top:584px;font-size:12px;color:#fff;font-family:'Liberation Sans',sans-serif;font-weight:normal;">布局1</div><div class="t" style="left:227px;top:584px;font-size:12px;color:#fff;font-family:'Liberation Sans',sans-serif;font-weight:normal;">布局2</div><div class="t" style="left:24.5px;top:603.5px;font-size:17px;color:#c6cacf;font-family:'Liberation Sans',sans-serif;font-weight:300;">指</div><div class="t" style="left:40.5px;top:603.5px;font-size:17px;color:#c6cacf;font-family:'Liberation Sans',sans-serif;font-weight:300;">定</div><div class="t" style="left:56.5px;top:603.5px;font-size:17px;color:#c6cacf;font-family:'Liberation Sans',sans-serif;font-weight:300;">下</div><div class="t" style="left:72.5px;top:603.5px;font-size:17px;color:#c6cacf;font-family:'Liberation Sans',sans-serif;font-weight:300;">一</div><div class="t" style="left:88.5px;top:603.5px;font-size:17px;color:#c6cacf;font-family:'Liberation Sans',sans-serif;font-weight:300;">点</div><div class="t" style="left:104.5px;top:603.5px;font-size:17px;color:#c6cacf;font-family:'Liberation Sans',sans-serif;font-weight:300;">或</div><div class="t" style="left:129px;top:605px;font-size:13.33px;color:#d3d7db;font-family:'Liberation Mono',monospace;font-weight:normal;">[</div><div class="t" style="left:136.5px;top:603.5px;font-size:17px;color:#c6cacf;font-family:'Liberation Sans',sans-serif;font-weight:300;">闭</div><div class="t" style="left:152.5px;top:603.5px;font-size:17px;color:#c6cacf;font-family:'Liberation Sans',sans-serif;font-weight:300;">合</div><div class="t" style="left:169px;top:605px;font-size:13.33px;color:#d3d7db;font-family:'Liberation Mono',monospace;font-weight:normal;">(</div><div class="t" style="left:177px;top:605px;font-size:13.33px;color:#d3d7db;font-family:'Liberation Mono',monospace;font-weight:normal;">C</div><div class="t" style="left:185px;top:605px;font-size:13.33px;color:#d3d7db;font-family:'Liberation Mono',monospace;font-weight:normal;">)</div><div class="t" style="left:193px;top:605px;font-size:13.33px;color:#d3d7db;font-family:'Liberation Mono',monospace;font-weight:normal;">/</div><div class="t" style="left:200.5px;top:603.5px;font-size:17px;color:#c6cacf;font-family:'Liberation Sans',sans-serif;font-weight:300;">拟</div><div class="t" style="left:216.5px;top:603.5px;font-size:17px;color:#c6cacf;font-family:'Liberation Sans',sans-serif;font-weight:300;">合</div><div class="t" style="left:232.5px;top:603.5px;font-size:17px;color:#c6cacf;font-family:'Liberation Sans',sans-serif;font-weight:300;">公</div><div class="t" style="left:248.5px;top:603.5px;font-size:17px;color:#c6cacf;font-family:'Liberation Sans',sans-serif;font-weight:300;">差</div><div class="t" style="left:265px;top:605px;font-size:13.33px;color:#d3d7db;font-family:'Liberation Mono',monospace;font-weight:normal;">(</div><div class="t" style="left:273px;top:605px;font-size:13.33px;color:#d3d7db;font-family:'Liberation Mono',monospace;font-weight:normal;">F</div><div class="t" style="left:281px;top:605px;font-size:13.33px;color:#d3d7db;font-family:'Liberation Mono',monospace;font-weight:normal;">)</div><div class="t" style="left:289px;top:605px;font-size:13.33px;color:#d3d7db;font-family:'Liberation Mono',monospace;font-weight:normal;">/</div><div class="t" style="left:296.5px;top:603.5px;font-size:17px;color:#c6cacf;font-family:'Liberation Sans',sans-serif;font-weight:300;">放</div><div class="t" style="left:312.5px;top:603.5px;font-size:17px;color:#c6cacf;font-family:'Liberation Sans',sans-serif;font-weight:300;">弃</div><div class="t" style="left:329px;top:605px;font-size:13.33px;color:#d3d7db;font-family:'Liberation Mono',monospace;font-weight:normal;">(</div><div class="t" style="left:337px;top:605px;font-size:13.33px;color:#d3d7db;font-family:'Liberation Mono',monospace;font-weight:normal;">U</div><div class="t" style="left:345px;top:605px;font-size:13.33px;color:#d3d7db;font-family:'Liberation Mono',monospace;font-weight:normal;">)</div><div class="t" style="left:353px;top:605px;font-size:13.33px;color:#d3d7db;font-family:'Liberation Mono',monospace;font-weight:normal;">]</div><div class="t" style="left:369px;top:605px;font-size:13.33px;color:#d3d7db;font-family:'Liberation Mono',monospace;font-weight:normal;">&lt;</div><div class="t" style="left:376.5px;top:603.5px;font-size:17px;color:#c6cacf;font-family:'Liberation Sans',sans-serif;font-weight:300;">起</div><div class="t" style="left:392.5px;top:603.5px;font-size:17px;color:#c6cacf;font-family:'Liberation Sans',sans-serif;font-weight:300;">点</div><div class="t" style="left:408.5px;top:603.5px;font-size:17px;color:#c6cacf;font-family:'Liberation Sans',sans-serif;font-weight:300;">切</div><div class="t" style="left:424.5px;top:603.5px;font-size:17px;color:#c6cacf;font-family:'Liberation Sans',sans-serif;font-weight:300;">向</div><div class="t" style="left:441px;top:605px;font-size:13.33px;color:#d3d7db;font-family:'Liberation Mono',monospace;font-weight:normal;">&gt;</div><div class="t" style="left:449px;top:605px;font-size:13.33px;color:#d3d7db;font-family:'Liberation Mono',monospace;font-weight:normal;">:</div><div class="t" style="left:24.5px;top:621.5px;font-size:17px;color:#c6cacf;font-family:'Liberation Sans',sans-serif;font-weight:300;">指</div><div class="t" style="left:40.5px;top:621.5px;font-size:17px;color:#c6cacf;font-family:'Liberation Sans',sans-serif;font-weight:300;">定</div><div class="t" style="left:56.5px;top:621.5px;font-size:17px;color:#c6cacf;font-family:'Liberation Sans',sans-serif;font-weight:300;">起</div><div class="t" style="left:72.5px;top:621.5px;font-size:17px;color:#c6cacf;font-family:'Liberation Sans',sans-serif;font-weight:300;">点</div><div class="t" style="left:88.5px;top:621.5px;font-size:17px;color:#c6cacf;font-family:'Liberation Sans',sans-serif;font-weight:300;">切</div><div class="t" style="left:104.5px;top:621.5px;font-size:17px;color:#c6cacf;font-family:'Liberation Sans',sans-serif;font-weight:300;">向</div><div class="t" style="left:121px;top:623px;font-size:13.33px;color:#d3d7db;font-family:'Liberation Mono',monospace;font-weight:normal;">:</div><div class="t" style="left:24.5px;top:639.5px;font-size:17px;color:#c6cacf;font-family:'Liberation Sans',sans-serif;font-weight:300;">指</div><div class="t" style="left:40.5px;top:639.5px;font-size:17px;color:#c6cacf;font-family:'Liberation Sans',sans-serif;font-weight:300;">定</div><div class="t" style="left:56.5px;top:639.5px;font-size:17px;color:#c6cacf;font-family:'Liberation Sans',sans-serif;font-weight:300;">端</div><div class="t" style="left:72.5px;top:639.5px;font-size:17px;color:#c6cacf;font-family:'Liberation Sans',sans-serif;font-weight:300;">点</div><div class="t" style="left:88.5px;top:639.5px;font-size:17px;color:#c6cacf;font-family:'Liberation Sans',sans-serif;font-weight:300;">切</div><div class="t" style="left:104.5px;top:639.5px;font-size:17px;color:#c6cacf;font-family:'Liberation Sans',sans-serif;font-weight:300;">向</div><div class="t" style="left:121px;top:641px;font-size:13.33px;color:#d3d7db;font-family:'Liberation Mono',monospace;font-weight:normal;">:</div><div class="t" style="left:24.5px;top:680.5px;font-size:17px;color:#c6cacf;font-family:'Liberation Sans',sans-serif;font-weight:300;">命</div><div class="t" style="left:40.5px;top:680.5px;font-size:17px;color:#c6cacf;font-family:'Liberation Sans',sans-serif;font-weight:300;">令</div><div class="t" style="left:57px;top:682px;font-size:13.33px;color:#d3d7db;font-family:'Liberation Mono',monospace;font-weight:normal;">:</div>
</body></html>
